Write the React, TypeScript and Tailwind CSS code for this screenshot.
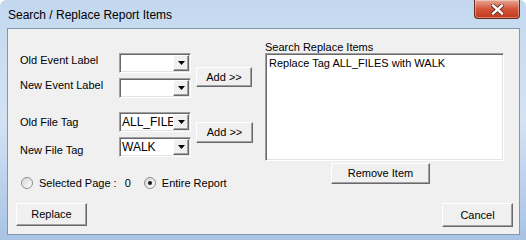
import React from 'react';

const raised =
  'border border-t-white border-l-white border-r-[#696969] border-b-[#696969] shadow-[inset_-1px_-1px_0_#a0a0a0] bg-[#f0f0f0]';
const sunken =
  'border border-t-[#a0a0a0] border-l-[#a0a0a0] border-r-white border-b-white shadow-[inset_1px_1px_0_#696969,inset_-1px_-1px_0_#e3e3e3] p-[1px] bg-white';

function WinButton({ children, className }: { children: React.ReactNode; className: string }) {
  return (
    <button className={`flex items-center justify-center text-[11px] text-black ${raised} ${className}`}>
      {children}
    </button>
  );
}

function Combo({ value }: { value?: string }) {
  return (
    <div className={`flex h-[20px] w-[72px] ${sunken}`}>
      <div className="flex-1 overflow-hidden whitespace-nowrap pl-[1px] text-[12px] leading-[16px] text-black">
        {value}
      </div>
      <div className={`flex h-[16px] w-[16px] items-center justify-center ${raised}`}>
        <svg width="7" height="4" viewBox="0 0 7 4">
          <polygon points="0,0 7,0 3.5,4" fill="#000" />
        </svg>
      </div>
    </div>
  );
}

function Radio({ checked, children }: { checked?: boolean; children: React.ReactNode }) {
  return (
    <div className="flex items-center">
      <div className="flex h-[12px] w-[12px] items-center justify-center rounded-full border border-[#8e8f8f] bg-gradient-to-br from-[#d6d6d6] to-white">
        {checked && <div className="h-[4px] w-[4px] rounded-full bg-[#1a1a1a]" />}
      </div>
      <span className="ml-[6px] text-[11px] text-black">{children}</span>
    </div>
  );
}

function FieldRow({ label, value, labelClass }: { label: string; value?: string; labelClass: string }) {
  return (
    <div className="flex h-[20px] items-center">
      <span className={`w-[99px] text-[11px] text-black ${labelClass}`}>{label}</span>
      <Combo value={value} />
    </div>
  );
}

export default function App() {
  return (
    <div className="flex h-[240px] w-[526px] flex-col overflow-hidden rounded-t-[6px] bg-gradient-to-b from-[#c3d8ef] via-[#d3e3f4] to-[#a8c3e3] font-['Liberation_Sans',Arial,sans-serif]">
      {/* title bar */}
      <div className="flex h-[28px] shrink-0 items-start justify-between pl-[8px]">
        <span className="mt-[6px] text-[12px] text-black">Search / Replace Report Items</span>
        <div className="mr-[6px] flex h-[19px] w-[46px] items-center justify-center rounded-b-[4px] border border-t-0 border-[#6b2a1f] bg-gradient-to-b from-[#e7a595] via-[#d2553a] to-[#c2381c] shadow-[inset_0_0_0_1px_rgba(255,255,255,0.35)]">
          <svg width="13" height="11" viewBox="0 0 13 11">
            <path d="M2 1.5 L11 9.5 M11 1.5 L2 9.5" stroke="#5a2418" strokeWidth="4" strokeLinecap="square" />
            <path d="M2 1.5 L11 9.5 M11 1.5 L2 9.5" stroke="#fff" strokeWidth="2.4" strokeLinecap="square" />
          </svg>
        </div>
      </div>

      {/* client area */}
      <div className="ml-[7px] mr-[6px] flex h-[207px] shrink-0 flex-col border border-[#8296ad] bg-[#f0f0f0]">
        <div className="flex">
          {/* left column */}
          <div className="w-[245px] pl-[12px] pt-[24px]">
            <div className="flex items-center">
              <div className="flex flex-col gap-[5px]">
                <FieldRow label="Old Event Label" labelClass="mb-[5px]" />
                <FieldRow label="New Event Label" labelClass="mb-[5px]" />
              </div>
              <WinButton className="ml-[5px] mt-[3px] h-[20px] w-[56px]">Add &gt;&gt;</WinButton>
            </div>

            <div className="mt-[14px] flex items-center">
              <div className="flex flex-col gap-[5px]">
                <FieldRow label="Old File Tag" value="ALL_FILES" labelClass="" />
                <FieldRow label="New File Tag" value="WALK" labelClass="mt-[6px]" />
              </div>
              <WinButton className="mb-[4px] ml-[5px] h-[21px] w-[57px]">Add &gt;&gt;</WinButton>
            </div>

            <div className="ml-[1px] mt-[18px] flex h-[16px] items-center gap-[13px]">
              <Radio>
                Selected Page :<span className="ml-[8px]">0</span>
              </Radio>
              <Radio checked>Entire Report</Radio>
            </div>
          </div>

          {/* right column */}
          <div className="ml-[12px] flex w-[239px] flex-col pt-[12px]">
            <span className="h-[12px] text-[11px] leading-[12px] text-black">Search Replace Items</span>
            <div className={`h-[108px] ${sunken}`}>
              <div className="pl-[2px] pt-[2px] text-[11px] leading-[13px] text-black">
                Replace Tag ALL_FILES with WALK
              </div>
            </div>
            <WinButton className="ml-[66px] mt-[2px] h-[21px] w-[99px]">Remove Item</WinButton>
          </div>
        </div>

        <div className="mt-[12px] flex items-start justify-between pl-[8px] pr-[6px]">
          <WinButton className="h-[23px] w-[71px]">Replace</WinButton>
          <WinButton className="h-[24px] w-[71px]">Cancel</WinButton>
        </div>
      </div>
    </div>
  );
}
